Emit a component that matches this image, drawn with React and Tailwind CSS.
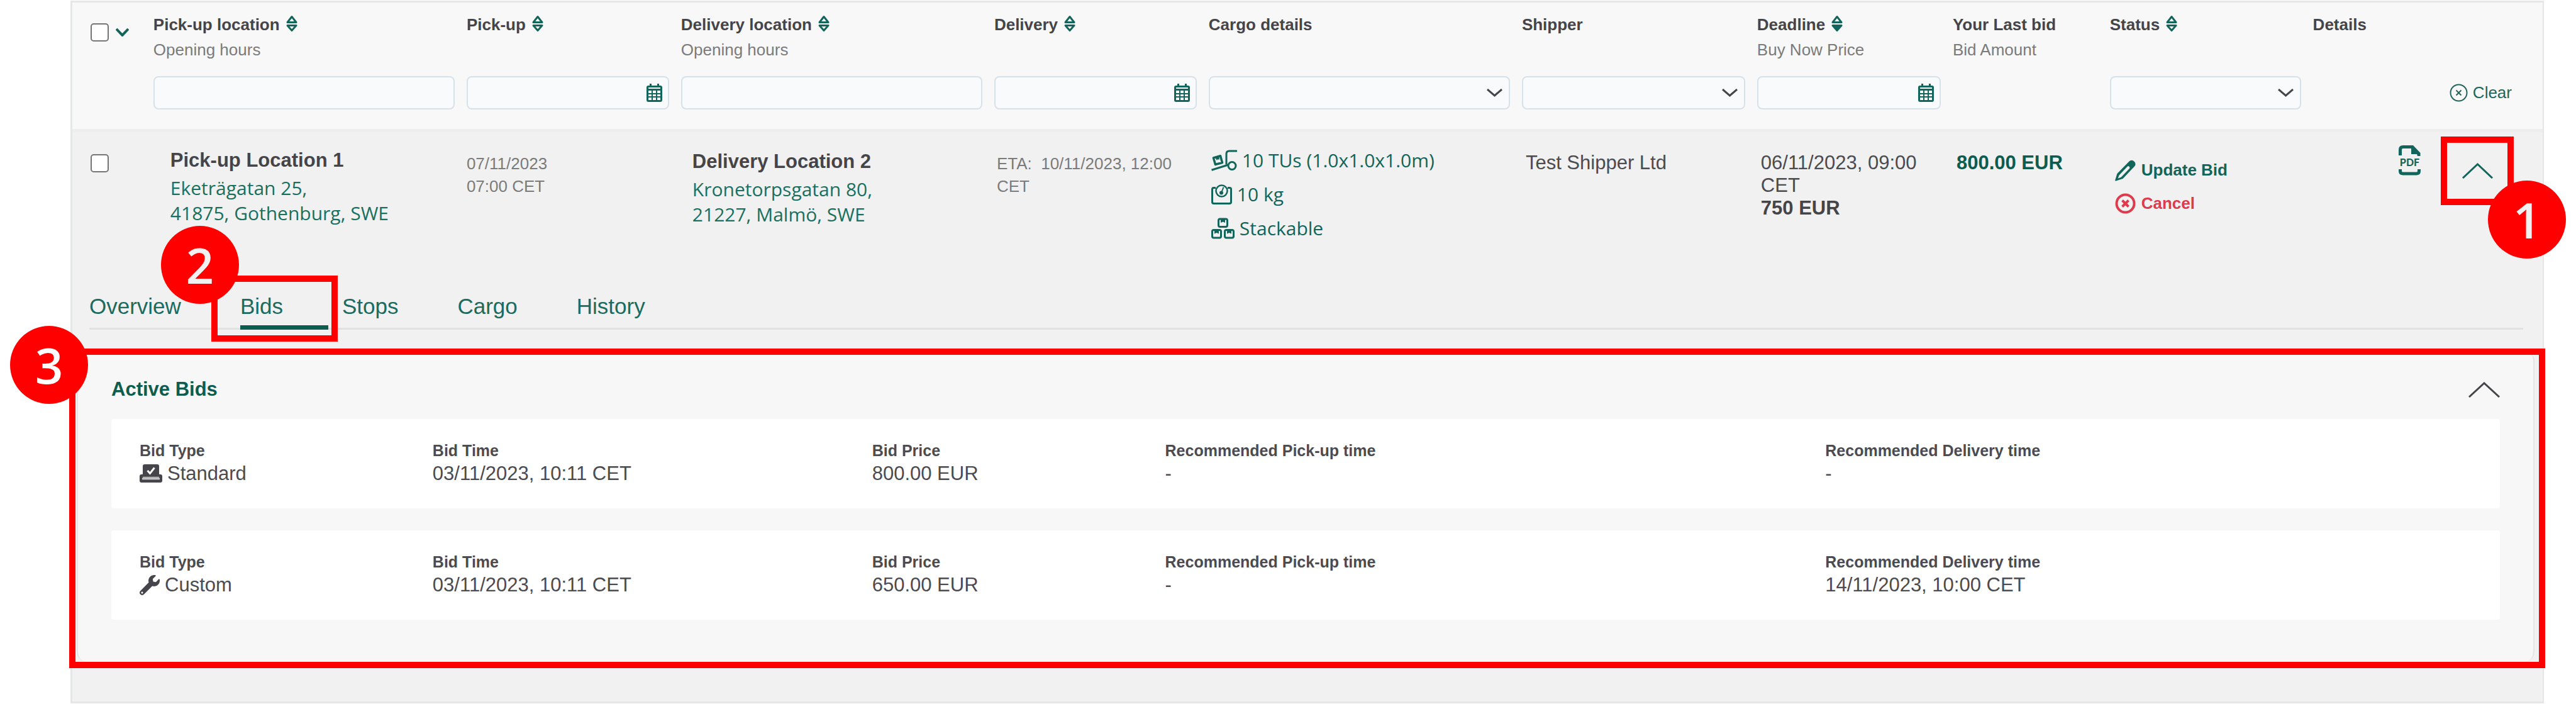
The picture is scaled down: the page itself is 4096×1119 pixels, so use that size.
import React from "react";

const LABEL = "text-[26px] leading-[40px] font-bold text-[#454549]";
const SUB = "text-[26px] leading-[40px] font-normal text-[#7b7b7b]";
const FIELD = "h-[53px] w-full rounded-lg border-2 border-[#d6e2e9] bg-[#f9fafc] text-[26px] text-[#454549]";

function SortIcon({ down }) {
  return (
    <svg width="18" height="30" viewBox="0 0 18 30" fill="none" stroke="#11655a" strokeWidth="3" strokeLinejoin="round">
      <path d="M9 2.5 16 11.5H2Z" />
      <path d="M9 24.5 16 16.5H2Z" fill={down ? "#11655a" : "none"} />
    </svg>
  );
}

function Chevron({ up, width, height, color, stroke }) {
  return (
    <svg width={width} height={height} viewBox={`0 0 ${width} ${height}`} fill="none" stroke={color} strokeWidth={stroke}>
      <path
        d={
          up
            ? `M1 ${height - 1} L${width / 2} 2 L${width - 1} ${height - 1}`
            : `M1 1 L${width / 2} ${height - 2} L${width - 1} 1`
        }
      />
    </svg>
  );
}

function CalendarIcon() {
  return (
    <svg width="25" height="29" viewBox="0 0 25 29">
      <rect x="0" y="3" width="25" height="26" rx="3" fill="#11655a" />
      <path d="M5 0h3v4h-3zM17 0h3v4h-3z" fill="#11655a" />
      <g fill="#f9fafc">
        <rect x="3" y="6" width="19" height="2" />
        <rect x="3" y="11" width="5" height="4" />
        <rect x="10" y="11" width="5" height="4" />
        <rect x="17" y="11" width="5" height="4" />
        <rect x="3" y="17" width="5" height="3" />
        <rect x="10" y="17" width="5" height="3" />
        <rect x="17" y="17" width="5" height="3" />
        <rect x="3" y="22" width="5" height="4" />
        <rect x="10" y="22" width="5" height="4" />
        <rect x="17" y="22" width="5" height="4" />
      </g>
    </svg>
  );
}

function CircleX({ size, stroke, cross, crossStroke }) {
  const c = size / 2;
  return (
    <svg width={size} height={size} viewBox={`0 0 ${size} ${size}`} fill="none" stroke="currentColor">
      <circle cx={c} cy={c} r={c - stroke / 2 - 0.5} strokeWidth={stroke} />
      <path
        d={`M${c - cross} ${c - cross} L${c + cross} ${c + cross} M${c + cross} ${c - cross} L${c - cross} ${c + cross}`}
        strokeWidth={crossStroke}
      />
    </svg>
  );
}

function PencilIcon() {
  return (
    <svg width="33" height="34" viewBox="0 0 33 34" fill="#11655a">
      <path
        fillRule="evenodd"
        d="M22.500 2.600C25 .2 28 .4 30.300 2.600c2.500 2.300 3 5.500.6 8L12.500 30 1.600 33.600c-1 .2-1.600-.4-1.400-1.400L3.400 22Zm-2.800 8.200L6.600 24.600 4.600 29.600l5-1.800L22.800 14c1-1.200.8-2.200-.2-3.200-1-.9-2-1-2.900 0Z"
      />
    </svg>
  );
}

function CartIcon() {
  return (
    <svg width="41" height="34" viewBox="0 0 41 34" fill="none" stroke="#11655a" strokeWidth="3">
      <path d="M41 2H28.500Q24 2 24 6.500V23.500" />
      <circle cx="33" cy="25.500" r="6" />
      <path d="M.5 32.200 27 24" />
      <path d="M3.500 13 14.500 9.800 17.500 20.500 6.500 23.500Z" strokeWidth="3.500" strokeLinejoin="round" />
      <path d="M6.800 12.300 12 10.800 12.300 15.300 10.300 14.600 9 16.300Z" fill="#11655a" strokeWidth="1" />
    </svg>
  );
}

function ScaleIcon() {
  return (
    <svg width="33" height="32" viewBox="0 0 33 32" fill="none" stroke="#11655a" strokeWidth="3">
      <path d="M7 5.500H4Q1.500 5.500 1.500 8V28Q1.500 30.500 4 30.500H29Q31.500 30.500 31.500 28V8Q31.500 5.500 29 5.500H26" />
      <circle cx="16.500" cy="10.500" r="9" strokeWidth="2.500" />
      <path d="M16 13.500 19.500 4.500" strokeWidth="2" />
      <circle cx="16" cy="13.500" r="3" fill="#11655a" stroke="none" />
    </svg>
  );
}

function StackIcon() {
  return (
    <svg width="37" height="34" viewBox="0 0 37 34" fill="none" stroke="#11655a" strokeWidth="3">
      <g>
        <rect x="11.500" y="2" width="14" height="12.500" rx="2.500" />
        <rect x="1.500" y="19.500" width="14" height="12.500" rx="2.500" />
        <rect x="21.500" y="19.500" width="14" height="12.500" rx="2.500" />
      </g>
      <g fill="#11655a" stroke="none">
        <path d="M15 2h7v6l-3.500-1.500L15 8Z" />
        <path d="M5 19.500h7v6L8.500 24 5 25.500Z" />
        <path d="M25 19.500h7v6L28.500 24 25 25.500Z" />
      </g>
    </svg>
  );
}

function PdfIcon() {
  return (
    <svg width="35" height="48" viewBox="0 0 35 48" fill="none" stroke="#11655a" strokeWidth="5">
      <path d="M2.500 16V7Q2.500 2.500 7 2.500H22" />
      <path d="M20 0H23L34.500 12V17H30L29 14H20Z" fill="#11655a" stroke="none" />
      <path d="M2.500 38V41Q2.500 45 7 45H28Q32.500 45 32.500 41V38" />
      <text
        x="17.500"
        y="33"
        textAnchor="middle"
        fill="#11655a"
        stroke="none"
        fontFamily="Lato,'Liberation Sans',sans-serif"
        fontSize="16"
        fontWeight="900"
      >
        PDF
      </text>
    </svg>
  );
}

function StandardIcon() {
  return (
    <svg width="36" height="29" viewBox="0 0 36 29" fill="#45454b">
      <path d="M8 0H28Q31 0 31 3V20H5V3Q5 0 8 0Z" />
      <path d="M3 16H5V21H31V16H33Q36 16 36 19V26Q36 29 33 29H3Q0 29 0 26V19Q0 16 3 16Z" />
      <path d="M4 23H32" stroke="#d8d8da" strokeWidth="2.500" />
      <path d="M12.500 10 16.500 14.500 23.500 5.500" fill="none" stroke="#fff" strokeWidth="3" />
    </svg>
  );
}

function WrenchIcon() {
  return (
    <svg width="32" height="32" viewBox="0 0 512 512" fill="#45454b">
      <path d="M507.700 109.100c-2.200-9-13.500-12.100-20.100-5.500l-74.400 74.400-67.900-11.300L334 98.900l74.400-74.400c6.600-6.600 3.400-17.900-5.700-20.200-47.400-11.700-99.600.9-136.600 37.900-39.600 39.600-50.500 97.100-34.100 147.200L18.700 402.800c-25 25-25 65.500 0 90.500s65.500 25 90.500 0l213.200-213.200c50.100 16.700 107.500 5.700 147.400-34.200 37.100-37.100 49.700-89.300 37.900-136.800zM64 472c-13.200 0-24-10.800-24-24 0-13.300 10.700-24 24-24s24 10.700 24 24c0 13.200-10.700 24-24 24z" />
    </svg>
  );
}

function Marker({ children, className }) {
  return (
    <span
      className={`absolute z-20 flex size-[124px] items-center justify-center rounded-full bg-[#ff0000] font-['Open_Sans',sans-serif] text-[78px] leading-none font-semibold ${className}`}
    >
      {children}
    </span>
  );
}

function Check({ label }) {
  return (
    <input
      type="checkbox"
      aria-label={label}
      className="size-[29px] shrink-0 appearance-none rounded-[5px] border-2 border-[#757575] bg-white"
    />
  );
}

function Head({ title, sub, sort, down }) {
  return (
    <th scope="col" className="pt-[15px] text-left align-top">
      {sort ? (
        <button type="button" className={`flex items-center gap-[10px] ${LABEL}`}>
          {title}
          <SortIcon down={down} />
        </button>
      ) : (
        <div className={LABEL}>{title}</div>
      )}
      {sub && <div className={SUB}>{sub}</div>}
    </th>
  );
}

function Filter({ label, kind }) {
  return (
    <td className="pt-[22px] pr-[19px] pb-[31px]">
      {kind === "text" && <input type="text" aria-label={label} className={`block px-3 ${FIELD}`} />}
      {kind === "date" && (
        <div className={`flex items-center pr-[9px] ${FIELD}`}>
          <input type="text" aria-label={label} className="h-full min-w-0 flex-1 bg-transparent px-3 outline-none" />
          <button type="button" aria-label={`Open calendar for ${label}`}>
            <CalendarIcon />
          </button>
        </div>
      )}
      {kind === "select" && (
        <div className="relative">
          <select aria-label={label} className={`block appearance-none px-3 ${FIELD}`}>
            <option></option>
          </select>
          <span className="pointer-events-none absolute inset-y-0 right-[12px] flex items-center">
            <Chevron width={25} height={13} color="#454549" stroke={3} />
          </span>
        </div>
      )}
    </td>
  );
}

function Location({ name, street, city, className }) {
  return (
    <td className={`align-top ${className}`}>
      <div className="text-[31px] leading-[40px] font-bold text-[#454549]">{name}</div>
      <a href="#map" className="mt-1 block font-['Open_Sans',sans-serif] text-[30px] leading-[40px] text-[#19705f]">
        {street}
        <br />
        {city}
      </a>
    </td>
  );
}

function CargoLine({ icon, children }) {
  return (
    <li className="flex h-[54px] items-center gap-[8px] font-['Open_Sans',sans-serif] text-[30px] leading-[54px] text-[#11655a]">
      {icon}
      {children}
    </li>
  );
}

function Tab({ children, active, marker }) {
  return (
    <button
      type="button"
      role="tab"
      aria-selected={!!active}
      className={`relative -mb-[3px] border-b-[7px] pr-[72px] pb-[10px] text-[35px] leading-[40px] text-[#1c6b5f] ${
        active ? "border-[#0c5c50]" : "border-transparent"
      }`}
    >
      {children}
      {marker}
    </button>
  );
}

function Bid({ icon, type, time, price, pickup, delivery }) {
  const fields = [
    ["Bid Type", type],
    ["Bid Time", time],
    ["Bid Price", price],
    ["Recommended Pick-up time", pickup],
    ["Recommended Delivery time", delivery],
  ];
  return (
    <dl className="grid grid-cols-[466fr_699fr_466fr_1050fr_1028fr] rounded-sm bg-white px-[45px] pt-[33px] pb-[37px]">
      {fields.map(([label, value], i) => (
        <div key={label}>
          <dt className="text-[25px] leading-[35px] font-bold text-[#4b4b50]">{label}</dt>
          <dd className="flex items-center gap-[8px] text-[31px] leading-[37px] text-[#4b4b50]">
            {i === 0 && icon}
            {value}
          </dd>
        </div>
      ))}
    </dl>
  );
}

export default function App() {
  return (
    <main className="bg-white pt-px pr-[51px] pl-[112px] font-['Liberation_Sans',Arial,sans-serif]">
      <div className="border-t-[3px] border-r-2 border-b-[3px] border-l-[3px] border-[#e5e6e6] bg-[#f1f1f1]">
        <table className="w-full table-fixed border-collapse">
          <colgroup>
            <col className="w-[3.28%]" />
            <col className="w-[12.68%]" />
            <col className="w-[8.68%]" />
            <col className="w-[12.68%]" />
            <col className="w-[8.68%]" />
            <col className="w-[12.68%]" />
            <col className="w-[9.52%]" />
            <col className="w-[7.92%]" />
            <col className="w-[6.36%]" />
            <col className="w-[8.22%]" />
            <col />
          </colgroup>
          <thead className="bg-[#f8f8f8]">
            <tr>
              <td className="pt-[33px] pl-[29px] align-top">
                <div className="flex items-center gap-[11px]">
                  <Check label="Select all" />
                  <button type="button" aria-label="Selection options">
                    <Chevron width={21} height={13} color="#11655a" stroke={4} />
                  </button>
                </div>
              </td>
              <Head title="Pick-up location" sub="Opening hours" sort />
              <Head title="Pick-up" sort />
              <Head title="Delivery location" sub="Opening hours" sort />
              <Head title="Delivery" sort />
              <Head title="Cargo details" />
              <Head title="Shipper" />
              <Head title="Deadline" sub="Buy Now Price" sort down />
              <Head title="Your Last bid" sub="Bid Amount" />
              <Head title="Status" sort />
              <Head title="Details" />
            </tr>
            <tr className="border-b-[5px] border-[#eeeeee]">
              <td></td>
              <Filter kind="text" label="Pick-up location" />
              <Filter kind="date" label="Pick-up" />
              <Filter kind="text" label="Delivery location" />
              <Filter kind="date" label="Delivery" />
              <Filter kind="select" label="Cargo details" />
              <Filter kind="select" label="Shipper" />
              <Filter kind="date" label="Deadline" />
              <td></td>
              <Filter kind="select" label="Status" />
              <td className="pt-[22px] pr-[49px] pb-[31px]">
                <button type="button" className="ml-auto flex items-center gap-[8px] text-[26px] text-[#1f665b]">
                  <CircleX size={29} stroke={2} cross={4} crossStroke={2} />
                  Clear
                </button>
              </td>
            </tr>
          </thead>
          <tbody>
            <tr>
              <td className="pt-[35px] pl-[29px] align-top">
                <div className="flex">
                  <Check label="Select Pick-up Location 1" />
                </div>
              </td>
              <Location
                className="pt-[25px] pl-[27px]"
                name="Pick-up Location 1"
                street="Eketrägatan 25,"
                city="41875, Gothenburg, SWE"
              />
              <td className="pt-[32px] align-top text-[26px] leading-[36px] text-[#7b7b7b]">
                07/11/2023
                <br />
                07:00 CET
              </td>
              <Location
                className="pt-[27px] pl-[18px]"
                name="Delivery Location 2"
                street="Kronetorpsgatan 80,"
                city="21227, Malmö, SWE"
              />
              <td className="pt-[32px] pl-[4px] align-top text-[26px] leading-[36px] text-[#7b7b7b]">
                ETA:&nbsp; 10/11/2023, 12:00
                <br />
                CET
              </td>
              <td className="pt-[18px] pl-[4px] align-top">
                <ul>
                  <CargoLine icon={<CartIcon />}>10 TUs (1.0x1.0x1.0m)</CargoLine>
                  <CargoLine icon={<ScaleIcon />}>10 kg</CargoLine>
                  <CargoLine icon={<StackIcon />}>Stackable</CargoLine>
                </ul>
              </td>
              <td className="pt-[31px] pl-[6px] align-top text-[31px] leading-[36px] text-[#4b4b50]">Test Shipper Ltd</td>
              <td className="pt-[31px] pl-[6px] align-top text-[31px] leading-[36px] text-[#4b4b50]">
                06/11/2023, 09:00
                <br />
                CET
                <br />
                <strong className="text-[#454549]">750 EUR</strong>
              </td>
              <td className="pt-[31px] pl-[6px] align-top text-[31px] leading-[36px] font-bold text-[#0c5c50]">
                800.00 EUR
              </td>
              <td className="pt-[34px] pl-[8px] align-top text-[26px] font-bold">
                <button type="button" className="flex h-[53px] items-center gap-[9px] text-[#11655a]">
                  <PencilIcon />
                  Update Bid
                </button>
                <button type="button" className="flex h-[53px] items-center gap-[9px] text-[#dc3c4e]">
                  <CircleX size={33} stroke={4} cross={5} crossStroke={4} />
                  Cancel
                </button>
              </td>
              <td className="pt-[7px] pr-[46px] align-top">
                <div className="flex items-start justify-end gap-[32px]">
                  <button type="button" aria-label="Download PDF" className="mt-[14px]">
                    <PdfIcon />
                  </button>
                  <button
                    type="button"
                    aria-label="Collapse row"
                    className="relative flex h-[109px] w-[116px] items-center justify-center border-[10px] border-[#ff0000]"
                  >
                    <Chevron up width={49} height={25} color="#11655a" stroke={3} />
                    <Marker className="top-[60px] left-[65px] text-[#f1f1f1]">1</Marker>
                  </button>
                </div>
              </td>
            </tr>
            <tr>
              <td colSpan={11} className="pt-[77px] pb-[53px]">
                <div role="tablist" className="mr-[31px] ml-[27px] flex gap-[22px] border-b-[3px] border-[#e1e1e1]">
                  <Tab>Overview</Tab>
                  <Tab
                    active
                    marker={
                      <span className="absolute -top-[29px] -right-[15px] -bottom-[26px] -left-[46px] z-10 border-[10px] border-[#ff0000]">
                        <Marker className="-top-[89px] -left-[90px] text-[#f1f1f1]">2</Marker>
                      </span>
                    }
                  >
                    Bids
                  </Tab>
                  <Tab>Stops</Tab>
                  <Tab>Cargo</Tab>
                  <Tab>History</Tab>
                </div>

                <section
                  aria-labelledby="active-bids"
                  className="relative -mr-[4px] -ml-[5px] mt-[30px] border-[10px] border-[#ff0000] pr-[7px] pl-[2px]"
                >
                  <Marker className="-top-[46px] -left-[104px] text-white">3</Marker>
                  <div className="rounded-t-lg rounded-b-2xl border-x-2 border-[#e4e4e4] bg-[#f7f7f7] px-[53px] pt-[35px] pb-[67px]">
                    <div className="flex items-center justify-between">
                      <h2 id="active-bids" className="text-[31px] leading-[40px] font-bold text-[#0c5c50]">
                        Active Bids
                      </h2>
                      <button type="button" aria-label="Collapse active bids">
                        <Chevron up width={50} height={25} color="#454549" stroke={3} />
                      </button>
                    </div>
                    <div className="mt-[27px] flex flex-col gap-[35px]">
                      <Bid
                        icon={<StandardIcon />}
                        type="Standard"
                        time="03/11/2023, 10:11 CET"
                        price="800.00 EUR"
                        pickup="-"
                        delivery="-"
                      />
                      <Bid
                        icon={<WrenchIcon />}
                        type="Custom"
                        time="03/11/2023, 10:11 CET"
                        price="650.00 EUR"
                        pickup="-"
                        delivery="14/11/2023, 10:00 CET"
                      />
                    </div>
                  </div>
                </section>
              </td>
            </tr>
          </tbody>
        </table>
      </div>
    </main>
  );
}
